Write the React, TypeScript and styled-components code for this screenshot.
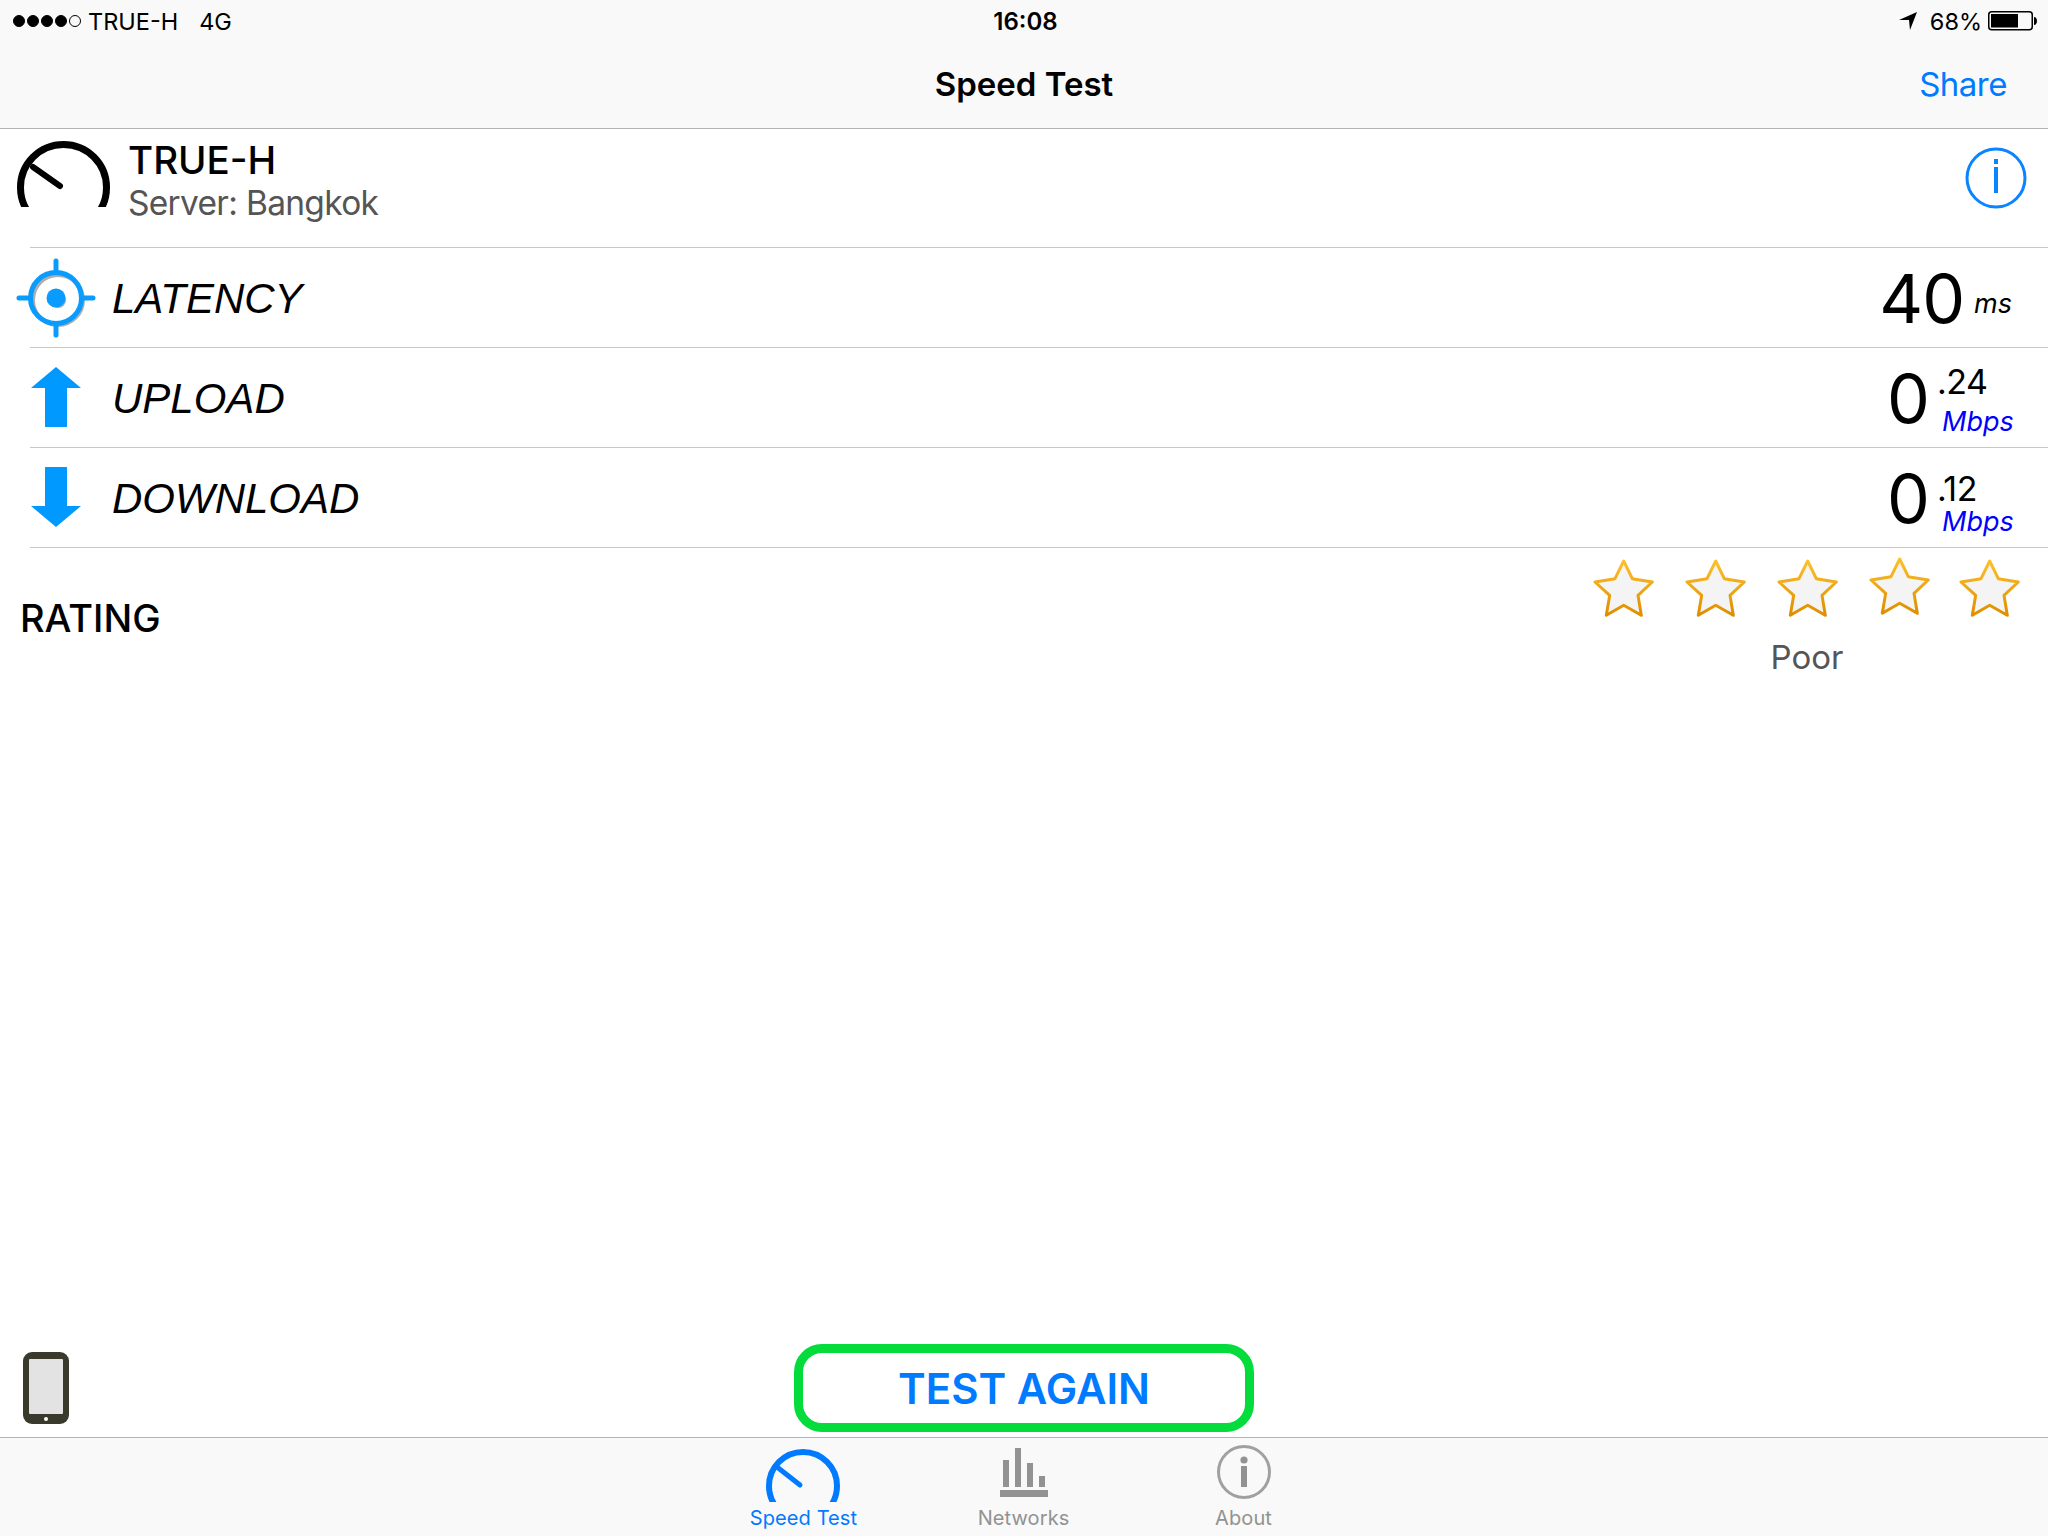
import React from "react";
import styled, { createGlobalStyle } from "styled-components";

const GlobalStyle = createGlobalStyle`
  html, body {
    margin: 0;
    padding: 0;
    background: #fff;
  }
  body {
    font-family: Inter, "Liberation Sans", sans-serif;
    overflow: hidden;
  }
`;

const StyledPage = styled.div`
  width: 2048px;
  height: 1536px;
  display: flex;
  flex-direction: column;
  background: #fff;
`;

const StyledHeader = styled.header`
  height: 128px;
  flex: none;
  box-sizing: content-box;
  background: #f9f9f9;
  border-bottom: 1px solid #b2b2b2;
  display: flex;
  flex-direction: column;
`;

const StyledStatusBar = styled.div`
  height: 42px;
  display: grid;
  grid-template-columns: 1fr auto 1fr;
  align-items: center;
  padding: 0 10px 0 13px;
  font-size: 23.5px;
  color: #000;
`;

const StyledStatusLeft = styled.div`
  display: flex;
  align-items: center;
`;

const StyledStatusRight = styled.div`
  display: flex;
  align-items: center;
  justify-content: flex-end;
`;

const StyledSignal = styled.div`
  display: flex;
  gap: 2px;
  margin-right: 7px;
`;

const StyledDot = styled.span<{ $empty?: boolean }>`
  width: 12px;
  height: 12px;
  box-sizing: border-box;
  border-radius: 50%;
  background: ${({ $empty }) => ($empty ? "transparent" : "#000")};
  border: 1px solid #000;
`;

const StyledCarrier = styled.span`
  margin-right: 21px;
`;

const StyledClock = styled.span`
  font-size: 24px;
  font-weight: 600;
`;

const StyledBattery = styled.svg`
  margin-left: 6px;
`;

const StyledPercent = styled.span`
  margin-left: 13px;
`;

const StyledNavBar = styled.div`
  flex: 1;
  display: grid;
  grid-template-columns: 1fr auto 1fr;
  align-items: center;
  padding-bottom: 2px;
`;

const StyledNavTitle = styled.h1`
  grid-column: 2;
  margin: 0;
  font-size: 33px;
  font-weight: 600;
  color: #000;
`;

const StyledShare = styled.span`
  justify-self: end;
  margin-right: 41px;
  font-size: 33px;
  letter-spacing: -0.5px;
  color: #007aff;
`;

const StyledServerRow = styled.section`
  height: 118px;
  flex: none;
  margin-left: 30px;
  padding-right: 21px;
  border-bottom: 1px solid #c8c8c8;
  display: flex;
  align-items: flex-start;
`;

const StyledGauge = styled.svg`
  margin: 12px 0 0 -13px;
  flex: none;
`;

const StyledServerText = styled.div`
  margin: 9px 0 0 18px;
  flex: 1;
  display: flex;
  flex-direction: column;
`;

const StyledServerName = styled.div`
  font-size: 38.5px;
  line-height: 45px;
  font-weight: 500;
  color: #000;
`;

const StyledServerCity = styled.div`
  font-size: 33.5px;
  line-height: 40px;
  letter-spacing: -0.7px;
  color: #555;
`;

const StyledInfo = styled.svg`
  margin-top: 18px;
  flex: none;
`;

const StyledMetricRow = styled.div`
  height: 99px;
  flex: none;
  margin-left: 30px;
  padding-right: 36px;
  border-bottom: 1px solid #c8c8c8;
  display: flex;
  align-items: center;
`;

const StyledMetricIcon = styled.svg`
  margin-left: -13px;
  flex: none;
  overflow: visible;
`;

const StyledMetricLabel = styled.div`
  margin-left: 17px;
  padding-top: 2px;
  flex: 1;
  font-family: "Liberation Sans", Arial, sans-serif;
  font-style: italic;
  font-size: 42px;
  color: #000;
`;

const StyledBigValue = styled.div`
  font-size: 68px;
  font-weight: 400;
  line-height: 80px;
  letter-spacing: -1px;
  color: #000;
`;

const StyledUnit = styled.span`
  margin: 12px 0 0 10px;
  font-size: 27px;
  font-style: italic;
  color: #000;
`;

const StyledFraction = styled.div`
  margin-left: 8px;
  width: 75px;
  align-self: stretch;
  display: flex;
  flex-direction: column;
`;

const StyledDecimal = styled.span<{ $top: number }>`
  height: 58px;
  box-sizing: border-box;
  padding-top: ${({ $top }) => $top}px;
  font-size: 34px;
  font-weight: 400;
  line-height: 38px;
  letter-spacing: -0.5px;
  color: #000;
`;

const StyledMbps = styled.span`
  margin-left: 5px;
  font-size: 27px;
  font-style: italic;
  line-height: 32px;
  color: #0000ff;
`;

const StyledRating = styled.section`
  flex: 1;
  padding: 9px 27px 0 20px;
  display: flex;
  justify-content: space-between;
  align-items: flex-start;
`;

const StyledRatingLabel = styled.div`
  margin-top: 38px;
  font-size: 38px;
  font-weight: 500;
  color: #000;
`;

const StyledRatingRight = styled.div`
  display: flex;
  flex-direction: column;
  align-items: center;
`;

const StyledStars = styled.div`
  display: flex;
  gap: 30px;

  svg:last-child {
    margin-left: -2px;
  }
`;

const StyledStar = styled.svg<{ $raised?: boolean }>`
  margin-top: ${({ $raised }) => ($raised ? "0" : "2px")};
`;

const StyledPoor = styled.div`
  margin-top: 18px;
  font-size: 33px;
  line-height: 40px;
  color: #555;
`;

const StyledActionBar = styled.div`
  flex: none;
  height: 88px;
  margin-bottom: 5px;
  padding-left: 23px;
  display: grid;
  grid-template-columns: 46px 1fr;
  align-items: center;
`;

const StyledTestButton = styled.button`
  margin-left: 725px;
  width: 460px;
  height: 88px;
  box-sizing: border-box;
  padding: 0;
  border: 9px solid #03dc3a;
  border-radius: 28px;
  background: #fff;
  color: #007aff;
  font-family: Inter, "Liberation Sans", sans-serif;
  font-size: 42px;
  font-weight: 600;
`;

const StyledTabBar = styled.nav`
  flex: none;
  height: 98px;
  padding-right: 1px;
  background: #f9f9f9;
  border-top: 1px solid #b2b2b2;
  display: flex;
  justify-content: center;
`;

const StyledTab = styled.div<{ $active?: boolean }>`
  width: 220px;
  display: flex;
  flex-direction: column;
  align-items: center;
  color: ${({ $active }) => ($active ? "#007aff" : "#929292")};
`;

const StyledTabIcon = styled.svg`
  height: 64px;
  flex: none;
`;

const StyledTabLabel = styled.span`
  margin-top: 4px;
  font-size: 20px;
  line-height: 24px;
  letter-spacing: 0.1px;
`;

function StarIcon({ id, raised }: { id: string; raised?: boolean }) {
  return (
    <StyledStar $raised={raised} width="62" height="60" viewBox="-2 -2 62 60">
      <defs>
        <linearGradient id={id} x1="0" y1="0" x2="0" y2="1">
          <stop offset="0" stopColor="#fcc02c" />
          <stop offset="1" stopColor="#df8e00" />
        </linearGradient>
      </defs>
      <path
        d="M28.7 0 L37.3 17.7 L57.3 21 L43 34.3 L46.3 54.3 L28.7 44.3 L11.3 54.3 L14.7 34.3 L0 21 L20 17.7 Z"
        fill="#f4f4f4"
        stroke={`url(#${id})`}
        strokeWidth="3"
        strokeLinejoin="round"
      />
    </StyledStar>
  );
}

function App() {
  return (
    <StyledPage>
      <GlobalStyle />
      <StyledHeader>
        <StyledStatusBar>
          <StyledStatusLeft>
            <StyledSignal>
              <StyledDot />
              <StyledDot />
              <StyledDot />
              <StyledDot />
              <StyledDot $empty />
            </StyledSignal>
            <StyledCarrier>TRUE-H</StyledCarrier>
            <span>4G</span>
          </StyledStatusLeft>
          <StyledClock>16:08</StyledClock>
          <StyledStatusRight>
            <svg width="18" height="18" viewBox="0 0 18 18">
              <path d="M18 0 L0 8 L10 8 L11 18 Z" fill="#000" />
            </svg>
            <StyledPercent>68%</StyledPercent>
            <StyledBattery width="50" height="20" viewBox="0 0 50 20">
              <rect x="0.75" y="0.75" width="43.5" height="18" rx="3" fill="none" stroke="#000" strokeWidth="1.5" />
              <rect x="3" y="3" width="27" height="13.5" fill="#000" />
              <path d="M46 6 C48 6 49 8 49 10 C49 12 48 14 46 14 Z" fill="#000" />
            </StyledBattery>
          </StyledStatusRight>
        </StyledStatusBar>
        <StyledNavBar>
          <StyledNavTitle>Speed Test</StyledNavTitle>
          <StyledShare>Share</StyledShare>
        </StyledNavBar>
      </StyledHeader>

      <StyledServerRow>
        <StyledGauge width="93" height="66" viewBox="0 0 93 66">
          <circle cx="46.5" cy="46.5" r="43" fill="none" stroke="#000" strokeWidth="7" />
          <path d="M16 26 L43 45" fill="none" stroke="#000" strokeWidth="6" strokeLinecap="round" />
        </StyledGauge>
        <StyledServerText>
          <StyledServerName>TRUE-H</StyledServerName>
          <StyledServerCity>Server: Bangkok</StyledServerCity>
        </StyledServerText>
        <StyledInfo width="62" height="62" viewBox="0 0 62 62">
          <circle cx="31" cy="31" r="29" fill="none" stroke="#0a84ff" strokeWidth="3" />
          <rect x="29" y="20" width="4" height="26" fill="#0a84ff" />
          <rect x="29" y="12" width="4" height="5" fill="#0a84ff" />
        </StyledInfo>
      </StyledServerRow>

      <StyledMetricRow>
        <StyledMetricIcon width="78" height="78" viewBox="0 0 78 78">
          <circle cx="41" cy="41" r="25" fill="none" stroke="#777" strokeWidth="4" opacity="0.6" />
          <circle cx="41" cy="41" r="8" fill="#777" opacity="0.6" />
          <circle cx="39" cy="39" r="25.5" fill="none" stroke="#0a9bff" strokeWidth="5" />
          <circle cx="39" cy="39" r="9.5" fill="#0a9bff" />
          <path d="M39 2 V13 M39 65 V76 M2 39 H13 M65 39 H76" stroke="#0a9bff" strokeWidth="5" strokeLinecap="round" />
        </StyledMetricIcon>
        <StyledMetricLabel>LATENCY</StyledMetricLabel>
        <StyledBigValue>40</StyledBigValue>
        <StyledUnit>ms</StyledUnit>
      </StyledMetricRow>

      <StyledMetricRow>
        <StyledMetricIcon width="78" height="78" viewBox="0 0 78 78">
          <path d="M39 8 L64 29 L50 29 L50 68 L28 68 L28 29 L14 29 Z" fill="#0099ff" />
        </StyledMetricIcon>
        <StyledMetricLabel>UPLOAD</StyledMetricLabel>
        <StyledBigValue>0</StyledBigValue>
        <StyledFraction>
          <StyledDecimal $top={15}>.24</StyledDecimal>
          <StyledMbps>Mbps</StyledMbps>
        </StyledFraction>
      </StyledMetricRow>

      <StyledMetricRow>
        <StyledMetricIcon width="78" height="78" viewBox="0 0 78 78">
          <path d="M28 8 L50 8 L50 47 L64 47 L39 68 L14 47 L28 47 Z" fill="#0099ff" />
        </StyledMetricIcon>
        <StyledMetricLabel>DOWNLOAD</StyledMetricLabel>
        <StyledBigValue>0</StyledBigValue>
        <StyledFraction>
          <StyledDecimal $top={22}>.12</StyledDecimal>
          <StyledMbps>Mbps</StyledMbps>
        </StyledFraction>
      </StyledMetricRow>

      <StyledRating>
        <StyledRatingLabel>RATING</StyledRatingLabel>
        <StyledRatingRight>
          <StyledStars>
            <StarIcon id="star-a" />
            <StarIcon id="star-b" />
            <StarIcon id="star-c" />
            <StarIcon id="star-d" raised />
            <StarIcon id="star-e" />
          </StyledStars>
          <StyledPoor>Poor</StyledPoor>
        </StyledRatingRight>
      </StyledRating>

      <StyledActionBar>
        <svg width="46" height="72" viewBox="0 0 46 72">
          <rect width="46" height="72" rx="9" fill="#3a3a2c" />
          <rect x="6" y="7" width="34" height="55" rx="1" fill="#e3e3e3" />
          <circle cx="23" cy="67" r="2" fill="#fff" />
        </svg>
        <StyledTestButton>TEST AGAIN</StyledTestButton>
      </StyledActionBar>

      <StyledTabBar>
        <StyledTab $active>
          <StyledTabIcon width="80" viewBox="0 0 80 64">
            <circle cx="39" cy="48" r="34" fill="none" stroke="currentColor" strokeWidth="6" />
            <path d="M13 29 L36 47" fill="none" stroke="currentColor" strokeWidth="5" strokeLinecap="round" />
          </StyledTabIcon>
          <StyledTabLabel>Speed Test</StyledTabLabel>
        </StyledTab>
        <StyledTab>
          <StyledTabIcon width="80" viewBox="0 0 80 64">
            <path
              d="M16 52 V59 H64 V52 Z M19 22 H25 V49 H19 Z M31 10 H37 V49 H31 Z M43 25 H49 V49 H43 Z M55 38 H61 V49 H55 Z"
              fill="currentColor"
            />
          </StyledTabIcon>
          <StyledTabLabel>Networks</StyledTabLabel>
        </StyledTab>
        <StyledTab>
          <StyledTabIcon width="80" viewBox="0 0 80 64">
            <circle cx="40" cy="34" r="25.5" fill="none" stroke="#a0a0a0" strokeWidth="3" />
            <circle cx="40" cy="22" r="3.6" fill="currentColor" />
            <rect x="37" y="28" width="6" height="21" fill="currentColor" />
          </StyledTabIcon>
          <StyledTabLabel>About</StyledTabLabel>
        </StyledTab>
      </StyledTabBar>
    </StyledPage>
  );
}

export default App;
